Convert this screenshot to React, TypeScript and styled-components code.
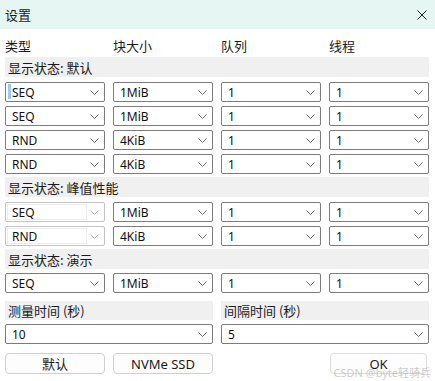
import styled, { createGlobalStyle } from "styled-components"

const GlobalStyle = createGlobalStyle`
    body {
        margin: 0;
        background: #ffffff;
        font-family: "Noto Sans", "Noto Sans CJK SC", sans-serif;
        color: #1a1a1a;
    }
`

const Window = styled.div`
    position: relative;
    width: 435px;
    height: 381px;
    overflow: hidden;
    background: #ffffff;
`

const TitleBar = styled.div`
    height: 29px;
    background: #e6f6f2;
    display: flex;
    align-items: center;
    justify-content: space-between;
    padding: 0 8px 0 5px;
`

const Title = styled.span`
    font-family: "Noto Sans CJK SC", sans-serif;
    font-size: 13px;
`

const CloseButton = styled.div`
    width: 10px;
    height: 10px;
    display: flex;
    align-items: center;
    justify-content: center;
`

const Body = styled.div`
    padding: 0 6px 0 5px;
    display: flex;
    flex-direction: column;
`

const Grid = styled.div<{ $cols?: number }>`
    display: grid;
    grid-template-columns: repeat(${p => p.$cols ?? 4}, 1fr);
    column-gap: 8px;
    row-gap: 4px;
`

const HeaderRow = styled(Grid)`
    height: 28px;
    align-items: end;
    padding-bottom: 3px;
    box-sizing: border-box;
    font-family: "Noto Sans CJK SC", sans-serif;
    font-size: 13px;
    line-height: 16px;
`

const Band = styled.div<{ $h?: number; $top?: number; $span?: number }>`
    height: ${p => p.$h ?? 20}px;
    margin-top: ${p => p.$top ?? 0}px;
    background: #f0f0f0;
    display: flex;
    align-items: center;
    padding-left: 3px;
    font-family: "Noto Sans CJK SC", sans-serif;
    font-size: 13px;
    grid-column: span ${p => p.$span ?? 1};
`

const Rows = styled(Grid)<{ $top?: number }>`
    margin-top: ${p => p.$top ?? 5}px;
`

const Select = styled.div<{ $disabled?: boolean; $span?: number }>`
    position: relative;
    height: 20px;
    box-sizing: border-box;
    border: 1px solid ${p => (p.$disabled ? "#c4c4c4" : "#7c7c7c")};
    border-radius: 2px;
    display: flex;
    align-items: center;
    justify-content: space-between;
    padding: 0 5px 0 6px;
    font-size: 12px;
    grid-column: span ${p => p.$span ?? 1};
    color: #111;
`

const DisabledField = styled.span`
    position: absolute;
    left: 1px;
    top: 1px;
    bottom: 1px;
    width: 78px;
    border: 1px solid #ececec;
`

const Value = styled.span`
    position: relative;
`

const Caret = styled.span`
    position: absolute;
    left: 2px;
    top: 1px;
    width: 3px;
    height: 15px;
    background: #9ccbf0;
`

const ButtonRow = styled(Grid)`
    margin-top: 9px;
`

const Button = styled.div<{ $faded?: boolean }>`
    height: 21px;
    box-sizing: border-box;
    border: 1px solid ${p => (p.$faded ? "#dedede" : "#d0d0d0")};
    border-radius: 4px;
    background: #fdfdfd;
    display: flex;
    align-items: center;
    justify-content: center;
    font-family: "Noto Sans", "Noto Sans CJK SC", sans-serif;
    font-size: 13px;
`

const OkButton = styled(Button)`
    grid-column: 4;
    margin: 0 2px 0 1px;
`

const Watermark = styled.div`
    position: absolute;
    right: 4px;
    bottom: 1px;
    font-family: "Noto Sans", "Noto Sans CJK SC", sans-serif;
    font-size: 11px;
    color: rgba(160, 160, 160, 0.55);
    pointer-events: none;
`

const Chevron = ({ faded }: { faded?: boolean }) => (
    <svg width="9" height="5" viewBox="0 0 9 5">
        <polyline points="0.5,0.5 4.5,4.5 8.5,0.5" fill="none" stroke={faded ? "#b5b5b5" : "#6a6a6a"} strokeWidth="1" />
    </svg>
)

const Combo = ({ value, disabled, caret, span }: { value: string; disabled?: boolean; caret?: boolean; span?: number }) => (
    <Select $disabled={disabled} $span={span}>
        {disabled && <DisabledField />}
        {caret && <Caret />}
        <Value>{value}</Value>
        <Chevron faded={disabled} />
    </Select>
)

const comboRow = (type: string, size: string, key: string, opts?: { disabled?: boolean; caret?: boolean }) => [
    <Combo key={key + "a"} value={type} disabled={opts?.disabled} caret={opts?.caret} />,
    <Combo key={key + "b"} value={size} />,
    <Combo key={key + "c"} value="1" />,
    <Combo key={key + "d"} value="1" />,
]

const App = () => {
    return (
        <>
            <GlobalStyle />
            <Window>
                <TitleBar>
                    <Title>设置</Title>
                    <CloseButton>
                        <svg width="10" height="10" viewBox="0 0 10 10">
                            <path d="M0.5 0.5 L9.5 9.5 M9.5 0.5 L0.5 9.5" stroke="#222" strokeWidth="1" />
                        </svg>
                    </CloseButton>
                </TitleBar>
                <Body>
                    <HeaderRow>
                        <span>类型</span>
                        <span>块大小</span>
                        <span>队列</span>
                        <span>线程</span>
                    </HeaderRow>

                    <Band>显示状态: 默认</Band>
                    <Rows>
                        {comboRow("SEQ", "1MiB", "r1", { caret: true })}
                        {comboRow("SEQ", "1MiB", "r2")}
                        {comboRow("RND", "4KiB", "r3")}
                        {comboRow("RND", "4KiB", "r4")}
                    </Rows>

                    <Band $top={3}>显示状态: 峰值性能</Band>
                    <Rows>
                        {comboRow("SEQ", "1MiB", "p1", { disabled: true })}
                        {comboRow("RND", "4KiB", "p2", { disabled: true })}
                    </Rows>

                    <Band $top={3}>显示状态: 演示</Band>
                    <Rows $top={4}>
                        {comboRow("SEQ", "1MiB", "d1")}
                    </Rows>

                    <Rows $cols={2} $top={8}>
                        <Band $h={19}>测量时间 (秒)</Band>
                        <Band $h={19}>间隔时间 (秒)</Band>
                        <Combo value="10" />
                        <Combo value="5" />
                    </Rows>

                    <ButtonRow>
                        <Button>默认</Button>
                        <Button>NVMe SSD</Button>
                        <OkButton $faded>OK</OkButton>
                    </ButtonRow>
                </Body>
                <Watermark>CSDN @byte轻骑兵</Watermark>
            </Window>
        </>
    )
}

export default App
